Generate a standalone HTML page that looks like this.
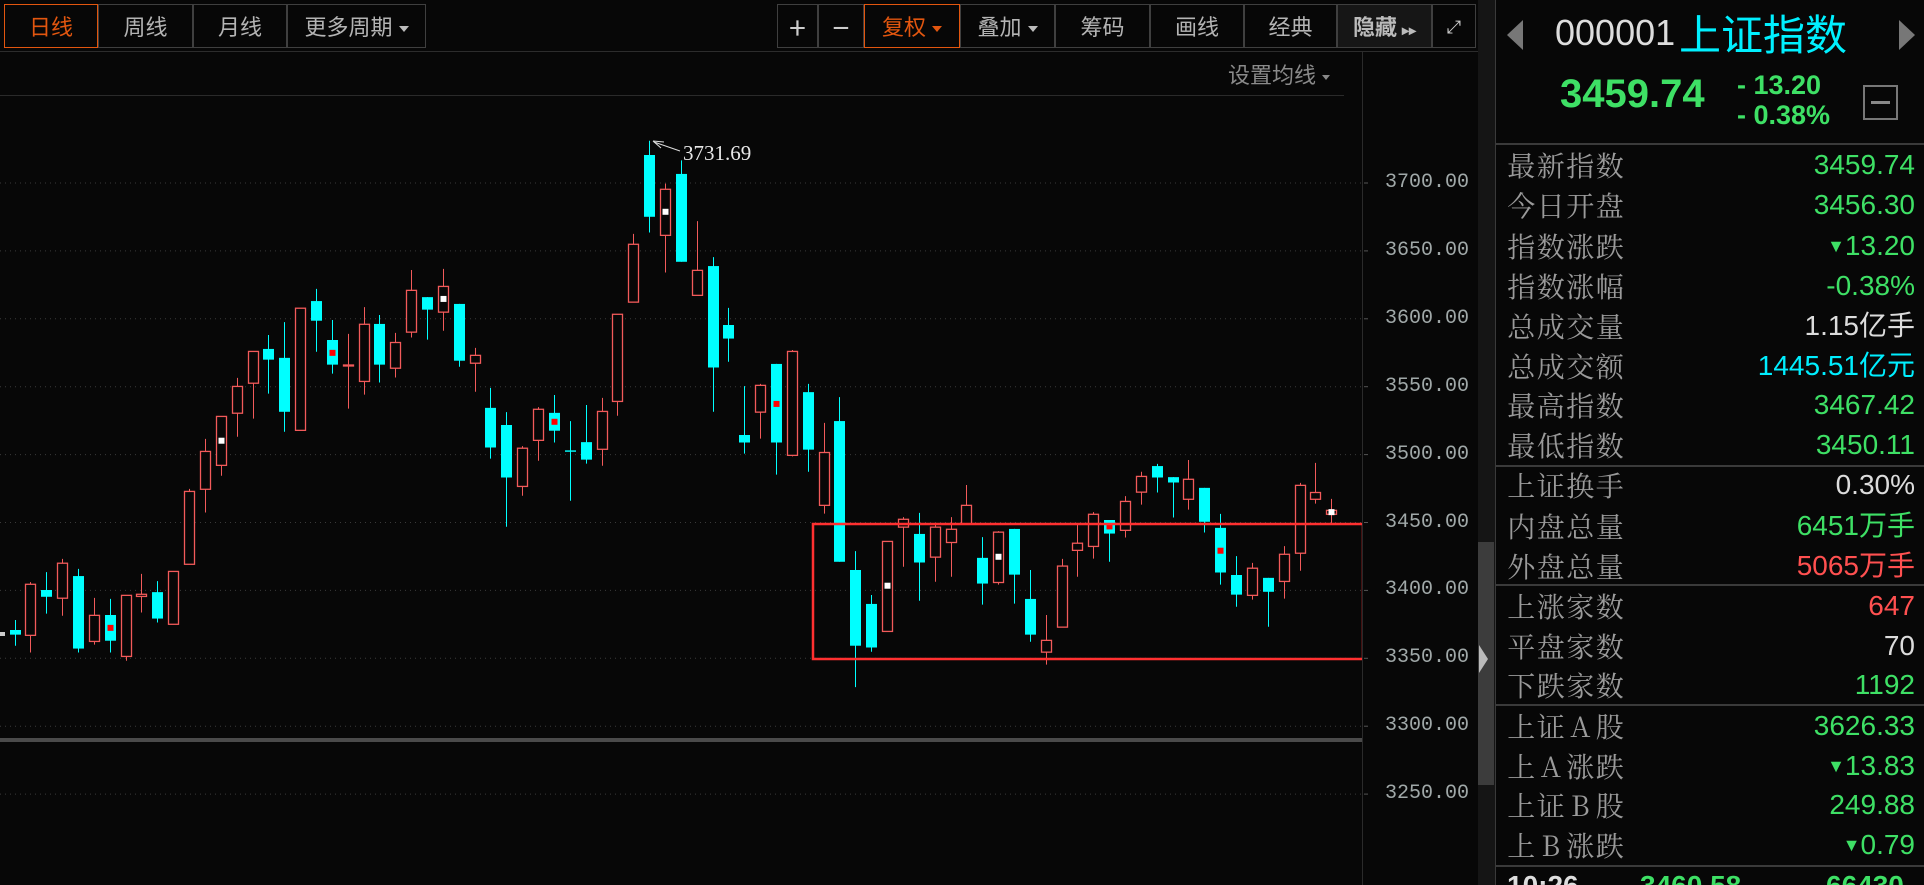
<!DOCTYPE html>
<html><head><meta charset="utf-8">
<style>
*{margin:0;padding:0;box-sizing:border-box}
html{width:1924px;height:885px;overflow:hidden;background:#070707}
body{width:1924px;height:885px;background:#070707;overflow:hidden;position:relative;font-family:"Liberation Sans","Noto Sans CJK SC",sans-serif}
.btn{position:absolute;top:4px;height:44px;border:1px solid #3f3f3f;color:#b4b4b4;font-size:22px;line-height:42px;text-align:center;font-family:"Noto Sans CJK SC",sans-serif}
.on{border-color:#e2560f;color:#e2560f}
.tri{display:inline-block;width:0;height:0;border-left:5px solid transparent;border-right:5px solid transparent;border-top:6px solid #bbb;vertical-align:middle;margin-left:6px}
.pl{position:absolute;left:1385px;font-family:"Liberation Mono",monospace;font-size:20px;color:#a0a8a8;line-height:20px}
.row{position:absolute;left:1507px;width:408px;height:40px;line-height:40px}
.lb{position:absolute;left:0;font-family:"Noto Serif CJK SC","Noto Sans CJK SC",serif;font-size:28px;color:#9a9a9a;letter-spacing:1px}
.lb span{display:inline-block;width:29.5px;text-align:center}
.vl{position:absolute;right:0;font-size:28px;color:#3ee065;font-family:"Liberation Sans","Noto Sans CJK SC",sans-serif}
.sep{position:absolute;left:1495px;width:429px;height:2px;background:#3a3a3a}
.dn{font-size:18px;vertical-align:3px}
</style></head><body>
<div class="btn on" style="left:4px;width:94px">日线</div>
<div class="btn" style="left:98px;width:95px">周线</div>
<div class="btn" style="left:193px;width:94px">月线</div>
<div class="btn" style="left:287px;width:139px">更多周期<span class="tri"></span></div>
<div class="btn" style="left:777px;width:41px;font-size:30px;color:#ccc">+</div>
<div class="btn" style="left:818px;width:46px;font-size:30px;color:#ccc">−</div>
<div class="btn on" style="left:864px;width:96px">复权<span class="tri" style="border-top-color:#e2560f"></span></div>
<div class="btn" style="left:960px;width:95px">叠加<span class="tri"></span></div>
<div class="btn" style="left:1055px;width:95px">筹码</div>
<div class="btn" style="left:1150px;width:94px">画线</div>
<div class="btn" style="left:1244px;width:93px">经典</div>
<div class="btn" style="left:1337px;width:95px;background:#161616;font-weight:bold;color:#bbb">隐藏 <span style="font-size:14px">▸▸</span></div>
<div class="btn" style="left:1432px;width:44px;font-size:18px;color:#ccc">⤢</div>
<div style="position:absolute;left:0;top:51px;width:1478px;height:1px;background:#2c2c2c"></div>
<div style="position:absolute;left:1228px;top:58px;font-size:22px;color:#8a8a8a;font-family:'Noto Sans CJK SC',sans-serif">设置均线<span class="tri" style="border-top-color:#888;border-left-width:4px;border-right-width:4px;border-top-width:5px"></span></div>
<div style="position:absolute;left:0;top:95px;width:1344px;height:1px;background:#2a2a2a"></div>
<div style="position:absolute;left:1362px;top:52px;width:1px;height:833px;background:#2a2a2a"></div>
<div style="position:absolute;left:1478px;top:0;width:17px;height:885px;background:#151515"></div>
<div style="position:absolute;left:1478px;top:542px;width:16px;height:243px;background:#3c3c3c"></div>
<div style="position:absolute;left:1479px;top:645px;width:0;height:0;border-top:14px solid transparent;border-bottom:14px solid transparent;border-left:9px solid #bbb"></div>
<div style="position:absolute;left:1495px;top:0;width:1px;height:885px;background:#3a3a3a"></div>

<svg id="ch" width="1362" height="885" style="position:absolute;left:0;top:0"></svg>
<svg id="ax" width="116" height="885" style="position:absolute;left:1362px;top:0"></svg>
<div id="labels"></div>

<div style="position:absolute;left:1507px;top:20px;width:0;height:0;border-top:15px solid transparent;border-bottom:15px solid transparent;border-right:16px solid #777"></div>
<div style="position:absolute;left:1899px;top:20px;width:0;height:0;border-top:15px solid transparent;border-bottom:15px solid transparent;border-left:16px solid #777"></div>
<div style="position:absolute;left:1555px;top:12px;font-size:36px;color:#ddd">000001</div>
<div style="position:absolute;left:1679px;top:5px;font-size:42px;color:#00f0ff;font-family:'Noto Sans CJK SC',sans-serif;line-height:56px">上证指数</div>
<div style="position:absolute;left:1560px;top:72px;font-size:40px;font-weight:bold;color:#3ee065">3459.74</div>
<div style="position:absolute;left:1737px;top:70px;font-size:27px;font-weight:bold;color:#3ee065;line-height:30px">- 13.20<br>- 0.38%</div>
<div style="position:absolute;left:1863px;top:85px;width:35px;height:35px;border:2px solid #777"><div style="position:absolute;left:6px;top:14px;width:19px;height:3px;background:#888"></div></div>
<div class="sep" style="top:143px"></div>
<div class="sep" style="top:465px"></div>
<div class="sep" style="top:584px"></div>
<div class="sep" style="top:704px"></div>
<div class="sep" style="top:865px"></div>
<div id="rows"></div>
<div style="position:absolute;left:1496px;top:867px;width:428px;height:18px;overflow:hidden">
<div style="position:absolute;left:11px;top:3px;font-size:28px;font-weight:bold;color:#ddd;line-height:32px">10:26</div>
<div style="position:absolute;left:144px;top:3px;font-size:28px;font-weight:bold;color:#3ee065;line-height:32px">3460.58</div>
<div style="position:absolute;left:330px;top:3px;font-size:28px;font-weight:bold;color:#3ee065;line-height:32px">66430</div>
</div>

<script>
var NS="http://www.w3.org/2000/svg";
function el(p,t,a){var e=document.createElementNS(NS,t);for(var k in a)e.setAttribute(k,a[k]);p.appendChild(e);return e;}
var ch=document.getElementById('ch'),ax=document.getElementById('ax');
var prices=["3700.00","3650.00","3600.00","3550.00","3500.00","3450.00","3400.00","3350.00","3300.00","3250.00"];
var lh='';
for(var i=0;i<10;i++){var y=183+i*67.9;
 el(ch,'line',{x1:0,x2:1362,y1:y,y2:y,stroke:'#3a3a3a','stroke-dasharray':'1 4'});
 el(ax,'line',{x1:2,x2:6,y1:y,y2:y,stroke:'#555'});
 lh+='<div class="pl" style="top:'+(y-10)+'px">'+prices[i]+'</div>';}
document.getElementById('labels').innerHTML=lh;
el(ch,'rect',{x:0,y:738,width:1362,height:4,fill:'#4a4a4a'});
var R='#f25a5a',C='#00ffff';
var Z4=[[46,'c',1400,1413,1372,1444],[91,'r',1272,1415,1266,1463],[139,'c',1288,1307,1238,1354],[187,'r',1213,1311,1201,1360],[235,'c',1249,1452,1229,1463],[283,'r',1359,1432,1310,1441],[331,'c',1358,1430,1313,1463,'#f00',1394],[379,'r',1303,1474,1303,1486],[424,'r',1300,1306,1243,1351],[472,'c',1294,1368,1263,1379],[520,'r',1236,1384,1236,1384],[568,'r',1012,1216,1005,1216],[616,'r',900,1006,865,1071],[664,'r',802,939,802,968,'#fff',870],[712,'r',718,793,694,859],[760,'r',620,709,620,808],[805,'c',613,643,574,738],[853,'c',638,789,538,845],[901,'r',499,841,499,841],[949,'c',479,534,445,621],[997,'c',588,657,532,682,'#f00',624],[1045,'r',658,660,571,780],[1093,'r',544,704,496,741],[1138,'c',543,657,518,707],[1186,'r',595,667,568,693],[1234,'r',449,566,392,581]];
var Z5=[[22,'c',468,503,468,587],[70,'r',438,510,389,562,'#fff',473],[118,'c',487,646,487,663],[166,'r',631,653,610,733],[211,'c',778,889,722,920],[259,'c',826,973,790,1111],[307,'r',891,998,885,1024],[355,'r',782,869,776,926],[403,'c',792,842,742,875,'#f00',817],[451,'c',897,901,815,1038],[499,'c',874,923,770,934],[547,'r',788,894,750,940],[592,'r',516,760,516,800],[640,'r',320,482,291,482],[688,'c',70,243,30,287],[736,'r',166,295,150,399,'#fff',229],[784,'c',123,369,85,369],[832,'r',393,463,255,463],[880,'c',381,665,356,789],[925,'c',546,584,498,649],[973,'c',854,875,717,906],[1021,'r',715,790,711,864],[1069,'c',655,875,655,965,'#f00',767],[1117,'r',620,911,616,914],[1165,'c',734,895,711,957],[1213,'r',903,1051,820,1074],[1257,'c',815,1209,748,1209]];
var Z6=[[46,'c',1232,1444,1179,1560],[94,'c',1327,1449,1302,1461],[142,'r',1152,1404,1152,1404,'#fff',1276],[190,'r',1090,1112,1084,1223],[238,'c',1131,1211,1072,1318],[286,'r',1112,1196,1106,1265],[334,'r',1118,1155,1084,1251],[379,'r',1051,1103,994,1103],[427,'c',1198,1270,1140,1329],[475,'r',1126,1267,1123,1273,'#fff',1195],[523,'c',1117,1245,1117,1326],[571,'c',1313,1413,1232,1433],[619,'r',1429,1462,1358,1497],[667,'r',1221,1392,1201,1392],[712,'r',1157,1177,1105,1251],[760,'r',1076,1166,1070,1200],[808,'c',1092,1130,1092,1209,'#f00',1110],[856,'r',1040,1121,1025,1141],[904,'r',970,1014,957,1049],[952,'c',941,973,935,1015],[1000,'c',972,987,972,1085],[1045,'r',978,1034,924,1063],[1093,'c',1002,1097,1002,1127],[1141,'c',1114,1239,1075,1273,'#f00',1178],[1189,'c',1246,1301,1193,1335],[1237,'r',1227,1303,1212,1315],[1285,'c',1254,1293,1254,1391],[1333,'r',1188,1264,1165,1312],[1381,'r',995,1185,988,1234],[1426,'r',1015,1034,932,1046],[1474,'r',1065,1076,1033,1100,'#fff',1070]];
function draw(arr,ox){arr.forEach(function(c){
 var x=c[0]/3+ox,bt=c[2]/2.8+130,bb=c[3]/2.8+130,wt=c[4]/2.8+130,wb=c[5]/2.8+130;
 var col=c[1]=='r'?R:C;x=Math.round(x)+0.5;
 el(ch,'line',{x1:x,x2:x,y1:wt,y2:wb,stroke:col,'stroke-width':1});
 var h=Math.max(bb-bt,1);
 if(c[1]=='r'){el(ch,'rect',{x:x-5,y:bt,width:10,height:h,fill:'#070707',stroke:col,'stroke-width':1.3});}
 else el(ch,'rect',{x:x-5.5,y:bt,width:11,height:h,fill:col});
 if(c[6]){var dy=c[7]/2.8+130;el(ch,'rect',{x:x-3,y:dy-3,width:6,height:6,fill:c[6]});}
});}
draw(Z4,0);draw(Z5,420);draw(Z6,840);
el(ch,'rect',{x:0,y:632,width:5,height:4,fill:'#ccc'});
el(ch,'rect',{x:813,y:524,width:550,height:135,fill:'none',stroke:'#ff3030','stroke-width':2.5});
el(ch,'line',{x1:654,y1:142,x2:680,y2:151,stroke:'#ddd','stroke-width':1});
el(ch,'path',{d:'M653 141 L664 142 M653 141 L661 148',stroke:'#ddd','stroke-width':1,fill:'none'});
var t=el(ch,'text',{x:683,y:160,fill:'#e8e8e8','font-size':21,'font-family':'Liberation Serif, serif'});t.textContent='3731.69';
var rows=[['最新指数','3459.74','#3ee065'],['今日开盘','3456.30','#3ee065'],['指数涨跌','<span class="dn">▼</span>13.20','#3ee065'],['指数涨幅','-0.38%','#3ee065'],['总成交量','1.15亿手','#dcdcdc'],['总成交额','1445.51亿元','#00eeff'],['最高指数','3467.42','#3ee065'],['最低指数','3450.11','#3ee065'],['上证换手','0.30%','#dcdcdc'],['内盘总量','6451万手','#3ee065'],['外盘总量','5065万手','#ff5050'],['上涨家数','647','#ff5050'],['平盘家数','70','#dcdcdc'],['下跌家数','1192','#3ee065'],['上证A股','3626.33','#3ee065'],['上A涨跌','<span class="dn">▼</span>13.83','#3ee065'],['上证B股','249.88','#3ee065'],['上B涨跌','<span class="dn">▼</span>0.79','#3ee065']];
var ys=[165,205,246,286,326,366,405,445,485,526,566,606,646,685,726,766,805,845];
var h='';rows.forEach(function(r,i){var lb=r[0].split('').map(function(c){return '<span>'+c+'</span>'}).join('');
 h+='<div class="row" style="top:'+(ys[i]-20)+'px"><div class="lb">'+lb+'</div><div class="vl" style="color:'+r[2]+'">'+r[1]+'</div></div>';});
document.getElementById('rows').innerHTML=h;
</script>
</body></html>
